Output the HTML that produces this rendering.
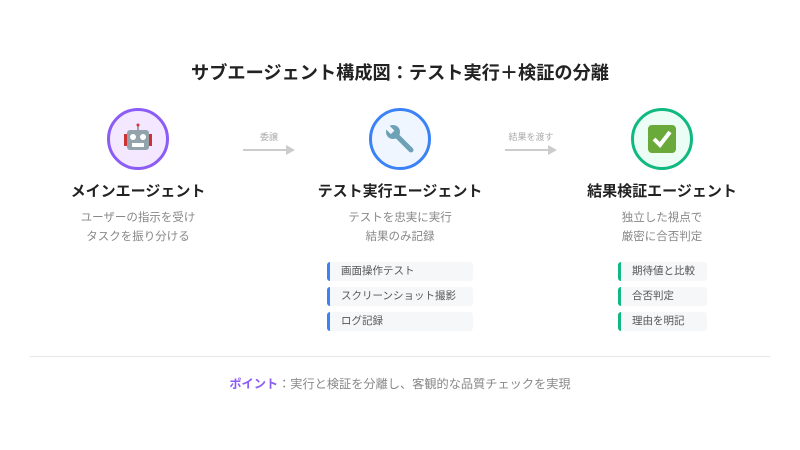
<!DOCTYPE html>
<html><head><meta charset="utf-8"><style>
*{margin:0;padding:0;box-sizing:border-box}
body{width:800px;height:450px;background:#fff;font-family:"Liberation Sans","Noto Sans CJK JP",sans-serif;position:relative;overflow:hidden;color:#222}
.abs{position:absolute}
.title{left:0;width:800px;top:59px;text-align:center;font-size:18.2px;font-weight:bold;color:#222}
.circ{width:62px;height:62px;border-radius:50%;top:108px;display:flex;align-items:center;justify-content:center}
.name{top:180px;width:240px;text-align:center;font-size:15px;font-weight:bold;color:#222}
.desc{top:209px;width:240px;text-align:center;font-size:11.5px;line-height:19px;color:#888}
.arrow{width:52px;text-align:center;font-size:9px;color:#aaa}
.item{height:19px;border-radius:3px;background:#f6f7f9;font-size:10.5px;color:#555;line-height:19px;padding-left:11px}
.b{border-left:3px solid #3b82f6;left:327px;width:146px}
.g{border-left:3px solid #10b981;left:618px;width:89px}
</style></head><body>
<div class="abs title">サブエージェント構成図：テスト実行＋検証の分離</div>

<div class="abs circ" style="left:107px;border:3px solid #8b5cf6;background:#f3e8ff">
<svg width="34" height="34" viewBox="0 0 34 34"><line x1="17" y1="3" x2="17" y2="8" stroke="#888" stroke-width="1.5"/><circle cx="17" cy="3" r="1.5" fill="#d33"/><rect x="3" y="12" width="4" height="12" fill="#c33"/><rect x="27" y="12" width="4" height="12" fill="#c33"/><rect x="6" y="8" width="22" height="20" rx="3" fill="#94a3ab"/><circle cx="12" cy="15" r="3" fill="#fff"/><circle cx="22" cy="15" r="3" fill="#fff"/><rect x="11" y="21" width="12" height="4" fill="#fff"/></svg></div>
<div class="abs circ" style="left:369px;border:3px solid #3b82f6;background:#eff6ff">
<svg width="34" height="34" viewBox="0 0 34 34"><line x1="11" y1="11" x2="28" y2="28" stroke="#6ea1b5" stroke-width="5" stroke-linecap="round"/><circle cx="10" cy="10" r="7" fill="#6ea1b5"/><rect x="7" y="2" width="5" height="8" fill="#eff6ff" transform="rotate(-45 10 10)"/></svg></div>
<div class="abs circ" style="left:631px;border:3px solid #10b981;background:#ecfdf5">
<svg width="32" height="32" viewBox="0 0 32 32"><rect x="2" y="2" width="28" height="28" rx="4" fill="#6aaa3a"/><path d="M8 16l6 6 10-13" stroke="#fff" stroke-width="4" fill="none"/></svg></div>

<div class="abs arrow" style="left:243px;top:130px">委譲<svg width="52" height="10" style="display:block;margin-top:2px"><line x1="0" y1="5" x2="44" y2="5" stroke="#ccc" stroke-width="2"/><path d="M43 0l9 5-9 5z" fill="#ccc"/></svg></div>
<div class="abs arrow" style="left:505px;top:130px">結果を渡す<svg width="52" height="10" style="display:block;margin-top:2px"><line x1="0" y1="5" x2="44" y2="5" stroke="#ccc" stroke-width="2"/><path d="M43 0l9 5-9 5z" fill="#ccc"/></svg></div>

<div class="abs name" style="left:18px">メインエージェント</div>
<div class="abs name" style="left:280px">テスト実行エージェント</div>
<div class="abs name" style="left:542px">結果検証エージェント</div>
<div class="abs desc" style="left:18px">ユーザーの指示を受け<br>タスクを振り分ける</div>
<div class="abs desc" style="left:280px">テストを忠実に実行<br>結果のみ記録</div>
<div class="abs desc" style="left:542px">独立した視点で<br>厳密に合否判定</div>

<div class="abs item b" style="top:262px">画面操作テスト</div>
<div class="abs item b" style="top:287px">スクリーンショット撮影</div>
<div class="abs item b" style="top:312px">ログ記録</div>
<div class="abs item g" style="top:262px">期待値と比較</div>
<div class="abs item g" style="top:287px">合否判定</div>
<div class="abs item g" style="top:312px">理由を明記</div>

<div class="abs" style="left:30px;width:740px;top:356px;border-top:1px solid #e5e7eb"></div>
<div class="abs" style="left:0;width:800px;top:374px;text-align:center;font-size:12.2px;color:#888"><b style="color:#8b5cf6">ポイント</b>：実行と検証を分離し、客観的な品質チェックを実現</div>
</body></html>
